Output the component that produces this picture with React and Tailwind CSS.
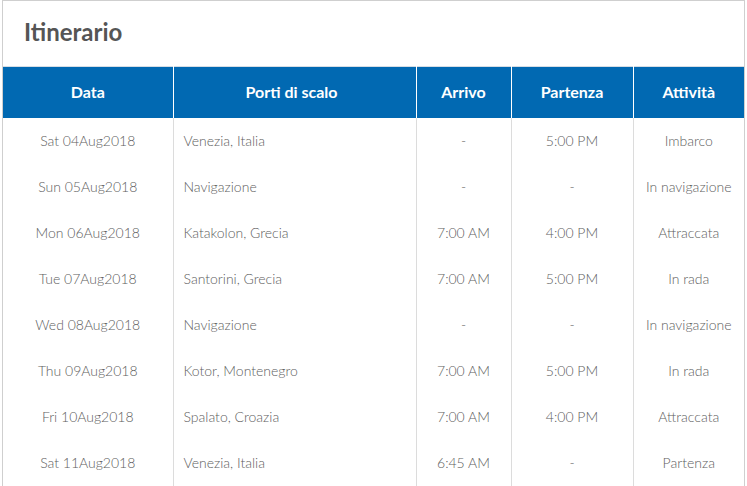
const rows = [
  ['Sat 04Aug2018', 'Venezia, Italia', '-', '5:00 PM', 'Imbarco'],
  ['Sun 05Aug2018', 'Navigazione', '-', '-', 'In navigazione'],
  ['Mon 06Aug2018', 'Katakolon, Grecia', '7:00 AM', '4:00 PM', 'Attraccata'],
  ['Tue 07Aug2018', 'Santorini, Grecia', '7:00 AM', '5:00 PM', 'In rada'],
  ['Wed 08Aug2018', 'Navigazione', '-', '-', 'In navigazione'],
  ['Thu 09Aug2018', 'Kotor, Montenegro', '7:00 AM', '5:00 PM', 'In rada'],
  ['Fri 10Aug2018', 'Spalato, Croazia', '7:00 AM', '4:00 PM', 'Attraccata'],
  ['Sat 11Aug2018', 'Venezia, Italia', '6:45 AM', '-', 'Partenza'],
]

const headers = ['Data', 'Porti di scalo', 'Arrivo', 'Partenza', 'Attività']

export default function App() {
  return (
    <div className="bg-white w-[747px] h-[486px] overflow-hidden pl-[2px] font-['Lato',sans-serif]">
      <div className="w-[743px] border border-[#cfcfcf] bg-white">
        <h2 className="h-[65px] pl-[21px] pt-[17px] text-[24px] font-bold text-[#555] leading-[28px]">
          Itinerario
        </h2>
        <table className="w-[741px] table-fixed border-collapse">
          <colgroup>
            <col className="w-[170px]" />
            <col className="w-[243px]" />
            <col className="w-[95px]" />
            <col className="w-[122px]" />
            <col />
          </colgroup>
          <thead>
            <tr className="h-[51px] bg-[#0169b2] border-t border-[#d6dde4]">
              {headers.map((h, i) => (
                <th
                  key={h}
                  className={`text-white font-bold text-[16px] text-center ${i > 0 ? 'border-l border-white' : ''} ${i === 1 ? 'pr-[6px]' : ''}`}
                >
                  {h}
                </th>
              ))}
            </tr>
          </thead>
          <tbody>
            {rows.map((r, ri) => (
              <tr key={ri} className="h-[46px] text-[14px] font-light text-[#606060]">
                <td className="text-center">{r[0]}</td>
                <td className="border-l border-[#dcdcdc] pl-[10px] text-left">{r[1]}</td>
                <td className="border-l border-[#dcdcdc] text-center">{r[2]}</td>
                <td className="border-l border-[#dcdcdc] text-center">{r[3]}</td>
                <td className="border-l border-[#dcdcdc] text-center">{r[4]}</td>
              </tr>
            ))}
          </tbody>
        </table>
      </div>
    </div>
  )
}
